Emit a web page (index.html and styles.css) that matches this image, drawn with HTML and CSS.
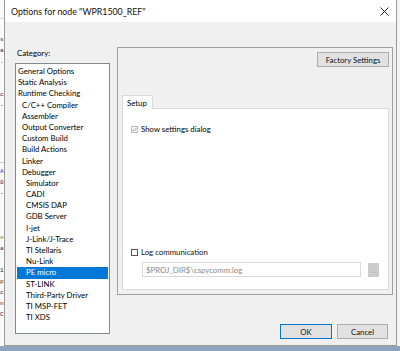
FILE: index.html
```html
<!DOCTYPE html>
<html lang="en">

<head>
  <meta charset="UTF-8">
  <meta name="viewport" content="width=device-width, initial-scale=1.0">
  <title>Options for node</title>
  <link rel="stylesheet" href="styles.css">
</head>

<body>
  <div class="screen">
    <!-- editor window behind the dialog -->
    <div class="behind">
      <p class="line"></p>
      <p class="line blue">.</p>
      <p class="line"></p>
      <p class="line dark">s</p>
      <p class="line dark">a</p>
      <p class="line blue">.</p>
      <p class="line"></p>
      <p class="line"></p>
      <p class="line dark">c</p>
      <p class="line dark">-</p>
      <p class="line"></p>
      <p class="line"></p>
      <p class="line"></p>
      <p class="line"></p>
      <p class="line dark">_</p>
      <p class="line blue">A</p>
      <p class="line dark">0</p>
      <p class="line dark">-</p>
      <p class="line"></p>
      <p class="line"></p>
      <p class="line"></p>
      <p class="line green">e</p>
      <p class="line dark">a</p>
      <p class="line"></p>
      <p class="line dark">1</p>
      <p class="line dark">p</p>
      <p class="line dark">c</p>
      <p class="line dark">n</p>
      <p class="line dark">C</p>
    </div>

    <div class="dialog">
      <div class="titlebar">
        <span class="title">Options for node "WPR1500_REF"</span>
        <svg class="close" width="9" height="9" viewBox="0 0 9 9">
          <path d="M0.5 0.5 L8.5 8.5 M8.5 0.5 L0.5 8.5" stroke="#222" stroke-width="1" fill="none" />
        </svg>
      </div>

      <div class="dialog-body">
        <div class="left-col">
          <p class="cat-label">Category:</p>
          <ul class="cat-list">
            <li>General Options</li>
            <li>Static Analysis</li>
            <li>Runtime Checking</li>
            <li class="lv1">C/C++ Compiler</li>
            <li class="lv1">Assembler</li>
            <li class="lv1">Output Converter</li>
            <li class="lv1">Custom Build</li>
            <li class="lv1">Build Actions</li>
            <li class="lv1">Linker</li>
            <li class="lv1">Debugger</li>
            <li class="lv2">Simulator</li>
            <li class="lv2">CADI</li>
            <li class="lv2">CMSIS DAP</li>
            <li class="lv2">GDB Server</li>
            <li class="lv2">I-jet</li>
            <li class="lv2">J-Link/J-Trace</li>
            <li class="lv2">TI Stellaris</li>
            <li class="lv2">Nu-Link</li>
            <li class="lv2 selected">PE micro</li>
            <li class="lv2">ST-LINK</li>
            <li class="lv2">Third-Party Driver</li>
            <li class="lv2">TI MSP-FET</li>
            <li class="lv2">TI XDS</li>
          </ul>
        </div>

        <div class="right-col">
          <div class="panel">
            <div class="panel-top">
              <span class="btn factory">Factory Settings</span>
            </div>
            <div class="tabs">
              <span class="tab">Setup</span>
            </div>
            <div class="tab-pane">
              <div class="check">
                <span class="box checked">
                  <svg width="5" height="5" viewBox="0 0 5 5">
                    <path d="M0.5 2.6 L2 4 L4.6 0.8" stroke="#9a9a9a" stroke-width="0.9" fill="none" />
                  </svg>
                </span>
                <span>Show settings dialog</span>
              </div>

              <div class="log-group">
                <div class="check">
                  <span class="box"></span>
                  <span class="log-text">Log communication</span>
                </div>
                <div class="path-row">
                  <span class="path-input">$PROJ_DIR$\cspycomm.log</span>
                  <span class="browse">...</span>
                </div>
              </div>
            </div>
          </div>

          <div class="actions">
            <span class="btn default">OK</span>
            <span class="btn">Cancel</span>
          </div>
        </div>
      </div>
    </div>

    <div class="edge"></div>
  </div>
  <div class="taskbar"></div>
</body>

</html>
```

FILE: styles.css
```css
* {
  margin: 0;
  padding: 0;
}

ul {
  list-style: none;
}

body {
  width: 400px;
  height: 351px;
  overflow: hidden;
  background-color: #fff;
  font-family: Lato, "Liberation Sans", sans-serif;
  font-size: 7.8px;
  color: #000;
}

.screen {
  display: flex;
  height: 346px;
}

/* editor behind */
.behind {
  width: 4px;
  background-color: #fbfbfb;
  padding-top: 1px;
}

.behind .line {
  height: 11px;
  line-height: 11px;
  font-family: "Liberation Mono", monospace;
  font-size: 6px;
  white-space: nowrap;
}

.behind .blue {
  color: #2b3bd6;
}

.behind .dark {
  color: #222;
}

.behind .green {
  color: #2e9a2e;
}

.edge {
  width: 3px;
  background-color: #f4f4f4;
}

.taskbar {
  height: 5px;
  background-color: #8ea3bc;
}

/* dialog */
.dialog {
  box-sizing: border-box;
  width: 393px;
  display: flex;
  flex-direction: column;
  background-color: #f0f0f0;
  border: 1px solid #9a9a9a;
  border-top: none;
}

.titlebar {
  height: 22px;
  display: flex;
  justify-content: space-between;
  align-items: center;
  padding: 0 6px;
  background-color: #fff;
}

.title {
  font-size: 8.8px;
  color: #111;
}

.close {
  display: block;
  margin-right: 1px;
}

.dialog-body {
  flex: 1;
  display: flex;
  gap: 7px;
  padding: 0 3px 0 10px;
}

.left-col {
  width: 95px;
  padding-top: 26px;
}

.cat-label {
  height: 11px;
  line-height: 11px;
  padding-left: 2px;
  margin-bottom: 4px;
}

.cat-list {
  box-sizing: border-box;
  height: 271px;
  padding-top: 2px;
  background-color: #fff;
  border: 1px solid #828790;
}

.cat-list li {
  height: 11.2px;
  line-height: 11.2px;
  margin: 0 1px;
  padding-left: 1px;
  white-space: nowrap;
}

.cat-list .lv1 {
  padding-left: 5px;
}

.cat-list .lv2 {
  padding-left: 9px;
}

.cat-list .selected {
  background-color: #0078d7;
  color: #fff;
}

.right-col {
  width: 276px;
  display: flex;
  flex-direction: column;
  padding-top: 25px;
}

.panel {
  box-sizing: border-box;
  height: 248px;
  display: flex;
  flex-direction: column;
  padding: 4px 3px 4px 4px;
  border: 1px solid #a0a0a0;
}

.panel-top {
  display: flex;
  justify-content: flex-end;
}

.btn {
  box-sizing: border-box;
  display: inline-flex;
  justify-content: center;
  align-items: center;
  height: 15px;
  background-color: #e1e1e1;
  border: 1px solid #adadad;
  color: #111;
}

.factory {
  width: 72px;
}

.tabs {
  display: flex;
  margin-top: 28px;
}

.tab {
  position: relative;
  box-sizing: border-box;
  width: 31px;
  height: 14px;
  margin-bottom: -1px;
  padding: 2px 0 0 4px;
  background-color: #fff;
  border: 1px solid #d9d9d9;
  border-bottom: none;
}

.tab-pane {
  flex: 1;
  display: flex;
  flex-direction: column;
  padding: 15px 8px 12px;
  background-color: #fff;
  border: 1px solid #d9d9d9;
}

.check {
  display: flex;
  align-items: center;
  gap: 3px;
  height: 10px;
}

.box {
  box-sizing: border-box;
  display: flex;
  justify-content: center;
  align-items: center;
  width: 7px;
  height: 7px;
  background-color: #fff;
  border: 1px solid #555;
}

.box.checked {
  background-color: #f4f4f4;
  border-color: #bcbcbc;
}

.box svg {
  display: block;
}

.log-text {
  color: #111;
}

.log-group {
  margin-top: auto;
}

.path-row {
  display: flex;
  align-items: center;
  margin-top: 5px;
  padding-left: 11px;
}

.path-input {
  box-sizing: border-box;
  display: flex;
  align-items: center;
  width: 219px;
  height: 15px;
  padding-left: 3px;
  background-color: #fff;
  border: 1px solid #d9d9d9;
  color: #8a8a8a;
}

.browse {
  box-sizing: border-box;
  display: flex;
  justify-content: center;
  align-items: flex-end;
  width: 11px;
  height: 14px;
  margin-left: 7px;
  padding-bottom: 3px;
  background-color: #cccccc;
  color: #a0a0a0;
  font-size: 6px;
  line-height: 6px;
}

.actions {
  display: flex;
  justify-content: flex-end;
  gap: 5px;
  margin-top: 29px;
  padding-right: 5px;
}

.actions .btn {
  width: 51px;
}

.actions .default {
  width: 52px;
  border-color: #0078d7;
}
```
